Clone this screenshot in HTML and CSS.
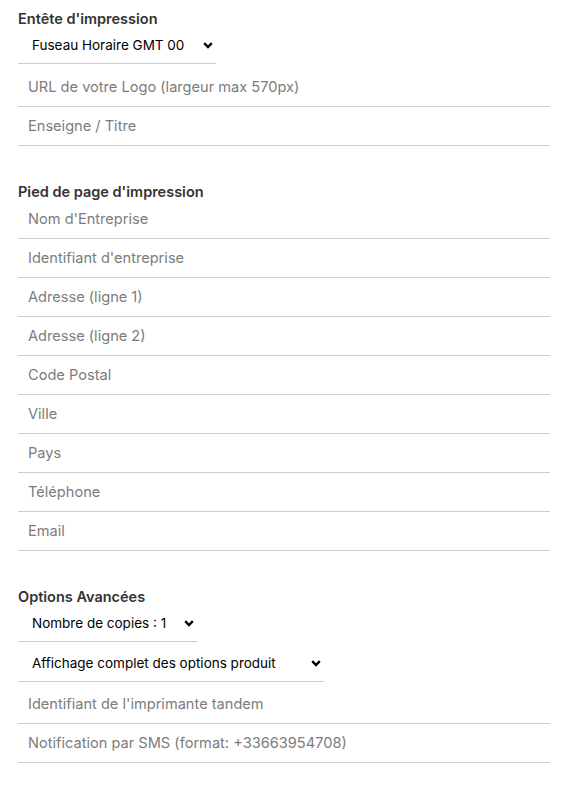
FILE: index.html
```html
<!DOCTYPE html>
<html lang="fr">
<head>
    <meta charset="UTF-8">
    <meta name="viewport" content="width=device-width, initial-scale=1.0">
    <title>Paramètres d'impression</title>
    <link rel="stylesheet" href="styles.css">
</head>
<body>

<form class="settings">
    <section class="group">
        <h3>Entête d'impression</h3>
        <div class="select-wrap tz">
            <select>
                <option>Fuseau Horaire GMT 00</option>
            </select>
            <svg class="chevron" width="10" height="7" viewBox="0 0 10 7"><path d="M1.2 1.2 5 5 8.8 1.2" fill="none" stroke="#000" stroke-width="2.4"/></svg>
        </div>
        <input type="text" placeholder="URL de votre Logo (largeur max 570px)">
        <input type="text" placeholder="Enseigne / Titre">
    </section>

    <section class="group">
        <h3>Pied de page d'impression</h3>
        <input type="text" placeholder="Nom d'Entreprise">
        <input type="text" placeholder="Identifiant d'entreprise">
        <input type="text" placeholder="Adresse (ligne 1)">
        <input type="text" placeholder="Adresse (ligne 2)">
        <input type="text" placeholder="Code Postal">
        <input type="text" placeholder="Ville">
        <input type="text" placeholder="Pays">
        <input type="text" placeholder="Téléphone">
        <input type="text" placeholder="Email">
    </section>

    <section class="group">
        <h3>Options Avancées</h3>
        <div class="select-wrap copies">
            <select>
                <option>Nombre de copies : 1</option>
            </select>
            <svg class="chevron" width="10" height="7" viewBox="0 0 10 7"><path d="M1.2 1.2 5 5 8.8 1.2" fill="none" stroke="#000" stroke-width="2.4"/></svg>
        </div>
        <div class="select-wrap options">
            <select>
                <option>Affichage complet des options produit</option>
            </select>
            <svg class="chevron" width="10" height="7" viewBox="0 0 10 7"><path d="M1.2 1.2 5 5 8.8 1.2" fill="none" stroke="#000" stroke-width="2.4"/></svg>
        </div>
        <input type="text" placeholder="Identifiant de l'imprimante tandem">
        <input type="text" placeholder="Notification par SMS (format: +33663954708)">
    </section>
</form>

</body>
</html>
```

FILE: styles.css
```css
body {
    font-family: 'Inter', 'Open Sans', sans-serif;
    background-color: #ffffff;
    margin: 0;
    padding: 11px 32px 0 18px;
    color: #333;
}

.settings {
    display: flex;
    flex-direction: column;
    gap: 38px;
}

.group {
    display: flex;
    flex-direction: column;
}

.group h3 {
    margin: 0;
    font-size: 14.5px;
    line-height: 16px;
    font-weight: 600;
    color: #333;
}

.group input {
    box-sizing: border-box;
    width: 100%;
    height: 39px;
    margin: 0;
    padding: 0 10px;
    border: none;
    border-bottom: 1px solid #cccccc;
    font-family: inherit;
    font-size: 14.6px;
    color: #333;
    background: transparent;
    outline: none;
}

.group input::placeholder {
    color: #7c7c7c;
}

/* custom select with bold chevron */
.select-wrap {
    position: relative;
    margin-bottom: 3px;
}

.select-wrap select {
    box-sizing: border-box;
    display: block;
    height: 37px;
    margin: 0;
    padding: 0 0 0 14px;
    border: none;
    border-bottom: 1px solid #cccccc;
    border-radius: 0;
    appearance: none;
    -webkit-appearance: none;
    background: transparent;
    font-family: inherit;
    font-size: 13.5px;
    color: #000;
    outline: none;
}

.select-wrap .chevron {
    position: absolute;
    top: 15px;
    pointer-events: none;
}

.tz { margin-bottom: 4px; }
.tz select { width: 198px; }
.tz .chevron { left: 185px; }

.copies select { width: 179px; }
.copies .chevron { left: 166px; }

.options select { width: 306px; }
.options .chevron { left: 293px; }
```
